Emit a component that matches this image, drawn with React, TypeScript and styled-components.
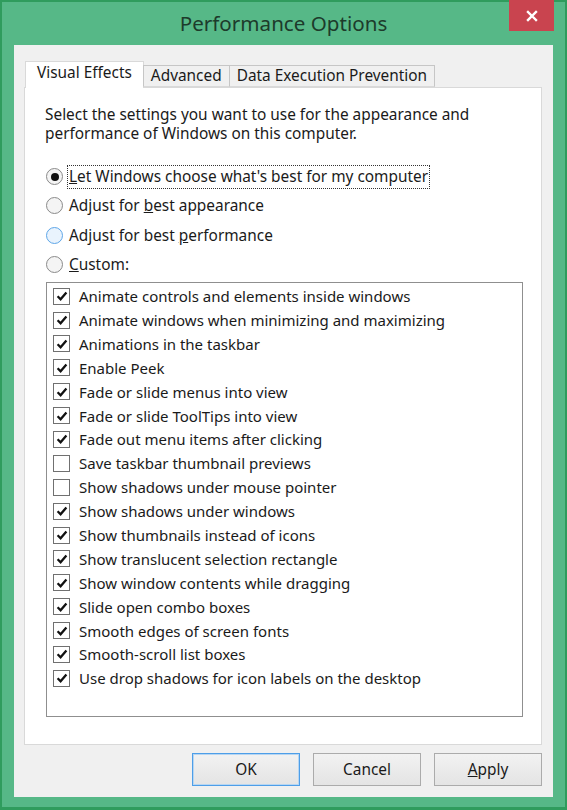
import React from "react";
import styled, { createGlobalStyle } from "styled-components";

const GlobalStyle = createGlobalStyle`
  html, body {
    margin: 0;
    padding: 0;
    background: #56b887;
  }
  * {
    box-sizing: border-box;
  }
`;

const uiFont = `"Segoe UI", "Noto Sans", "Open Sans", sans-serif`;

const effects: { label: string; checked: boolean }[] = [
  { label: "Animate controls and elements inside windows", checked: true },
  { label: "Animate windows when minimizing and maximizing", checked: true },
  { label: "Animations in the taskbar", checked: true },
  { label: "Enable Peek", checked: true },
  { label: "Fade or slide menus into view", checked: true },
  { label: "Fade or slide ToolTips into view", checked: true },
  { label: "Fade out menu items after clicking", checked: true },
  { label: "Save taskbar thumbnail previews", checked: false },
  { label: "Show shadows under mouse pointer", checked: false },
  { label: "Show shadows under windows", checked: true },
  { label: "Show thumbnails instead of icons", checked: true },
  { label: "Show translucent selection rectangle", checked: true },
  { label: "Show window contents while dragging", checked: true },
  { label: "Slide open combo boxes", checked: true },
  { label: "Smooth edges of screen fonts", checked: true },
  { label: "Smooth-scroll list boxes", checked: true },
  { label: "Use drop shadows for icon labels on the desktop", checked: true },
];

export default function App() {
  return (
    <>
      <GlobalStyle />
      <Window>
        <TitleBar>
          <span />
          <Title>Performance Options</Title>
          <CloseButton aria-label="Close">
            <svg width="12" height="12" viewBox="0 0 12 12">
              <path d="M2 2 L10 10 M10 2 L2 10" stroke="#fff" strokeWidth="2.4" strokeLinecap="square" />
            </svg>
          </CloseButton>
        </TitleBar>

        <Panel>
          <TabStrip>
            <Tab $active>Visual Effects</Tab>
            <Tab>Advanced</Tab>
            <Tab>Data Execution Prevention</Tab>
          </TabStrip>

          <TabPage>
            <Intro>
              Select the settings you want to use for the appearance and
              <br />
              performance of Windows on this computer.
            </Intro>

            <RadioGroup>
              <RadioRow>
                <RadioDot $checked />
                <FocusLabel>
                  <u>L</u>et Windows choose what's best for my computer
                </FocusLabel>
              </RadioRow>
              <RadioRow>
                <RadioDot />
                <span>
                  Adjust for <u>b</u>est appearance
                </span>
              </RadioRow>
              <RadioRow>
                <RadioDot $hover />
                <span>
                  Adjust for best <u>p</u>erformance
                </span>
              </RadioRow>
              <RadioRow>
                <RadioDot />
                <span>
                  <u>C</u>ustom:
                </span>
              </RadioRow>
            </RadioGroup>

            <ListBox>
              {effects.map((e) => (
                <CheckRow key={e.label}>
                  <CheckBox>
                    {e.checked && (
                      <svg width="14" height="14" viewBox="0 0 14 14">
                        <path
                          d="M2.6 7.2 L5.6 10.2 L11.4 3.4"
                          fill="none"
                          stroke="#111"
                          strokeWidth="2.3"
                        />
                      </svg>
                    )}
                  </CheckBox>
                  <span>{e.label}</span>
                </CheckRow>
              ))}
            </ListBox>
          </TabPage>

          <ButtonRow>
            <Button $default>OK</Button>
            <Button>Cancel</Button>
            <Button>
              <u>A</u>pply
            </Button>
          </ButtonRow>
        </Panel>
      </Window>
    </>
  );
}

const Window = styled.div`
  width: 567px;
  height: 810px;
  background: #56b887;
  border: 2px solid #2f9c5d;
  border-bottom-width: 3px;
  display: flex;
  flex-direction: column;
  font-family: ${uiFont};
  color: #1a1a1a;
`;

const TitleBar = styled.div`
  height: 43px;
  display: grid;
  grid-template-columns: 1fr auto 1fr;
  align-items: start;
`;

const Title = styled.div`
  font-size: 20.6px;
  color: #1d3b2b;
  padding-top: 7px;
`;

const CloseButton = styled.button`
  justify-self: end;
  margin: -2px 11px 0 0;
  width: 45px;
  height: 31px;
  border: none;
  background: #c9444f;
  display: flex;
  align-items: center;
  justify-content: center;
  padding: 0;
`;

const Panel = styled.div`
  margin: 0 12px;
  height: 752px;
  background: #f0f0f0;
  padding: 16px 11px 0 10px;
  display: flex;
  flex-direction: column;
`;

const TabStrip = styled.div`
  display: flex;
  align-items: flex-end;
  height: 26px;
  padding-left: 1px;
  position: relative;
  z-index: 1;
`;

const Tab = styled.div<{ $active?: boolean }>`
  font-size: 15.4px;
  border: 1px solid ${(p) => (p.$active ? "#d9d9d9" : "#c6c6c6")};
  border-bottom: ${(p) => (p.$active ? "none" : "1px solid #d9d9d9")};
  background: ${(p) => (p.$active ? "#ffffff" : "#f0f0f0")};
  height: ${(p) => (p.$active ? "27px" : "22px")};
  margin-bottom: ${(p) => (p.$active ? "-1px" : "0")};
  padding: ${(p) => (p.$active ? "1px 11px 0" : "0 7px")};
  margin-left: ${(p) => (p.$active ? "0" : "-1px")};
  line-height: 19px;
  white-space: nowrap;
  color: #1a1a1a;
`;

const TabPage = styled.div`
  height: 658px;
  background: #ffffff;
  border: 1px solid #d9d9d9;
  padding: 17px 18px 0 20px;
  display: flex;
  flex-direction: column;
`;

const Intro = styled.p`
  margin: 0;
  font-size: 15.4px;
  line-height: 19px;
  color: #1a1a1a;
`;

const RadioGroup = styled.div`
  margin-top: 19px;
  display: flex;
  flex-direction: column;
`;

const RadioRow = styled.div`
  height: 29.3px;
  display: flex;
  align-items: center;
  gap: 6px;
  font-size: 15.4px;
  padding-left: 1px;
`;

const RadioDot = styled.span<{ $checked?: boolean; $hover?: boolean }>`
  width: 17px;
  height: 17px;
  flex: none;
  border-radius: 50%;
  border: 1px solid ${(p) => (p.$hover ? "#5ea6e8" : "#8a8a8a")};
  background: ${(p) => (p.$hover ? "#e9f3fd" : "#f4f4f4")};
  display: flex;
  align-items: center;
  justify-content: center;

  &::after {
    content: "";
    display: ${(p) => (p.$checked ? "block" : "none")};
    width: 8px;
    height: 8px;
    border-radius: 50%;
    background: #111;
  }
`;

const FocusLabel = styled.span`
  border: 1px dotted #333;
  padding: 0 1px 1px 1px;
  margin-left: -2px;
`;

const ListBox = styled.div`
  margin-top: 3px;
  margin-left: 1px;
  height: 435px;
  border: 1px solid #8f8f8f;
  background: #fff;
  padding: 1px 0 0 6px;
  display: flex;
  flex-direction: column;
`;

const CheckRow = styled.div`
  height: 23.9px;
  display: flex;
  align-items: center;
  gap: 9px;
  font-size: 15px;
  color: #1a1a1a;
`;

const CheckBox = styled.span`
  width: 17px;
  height: 17px;
  flex: none;
  border: 1px solid #707070;
  background: #fff;
  display: flex;
  align-items: center;
  justify-content: center;
`;

const ButtonRow = styled.div`
  margin-top: 8px;
  display: flex;
  justify-content: flex-end;
  gap: 13px;
`;

const Button = styled.button<{ $default?: boolean }>`
  width: 108px;
  height: 33px;
  font-family: ${uiFont};
  font-size: 15.4px;
  color: #1a1a1a;
  background: linear-gradient(#f2f2f2, #e4e4e4);
  border: 1px solid ${(p) => (p.$default ? "#4d9ee8" : "#ababab")};
  box-shadow: ${(p) => (p.$default ? "inset 0 0 0 1px #b7d6f2" : "none")};
  padding: 0;
`;
